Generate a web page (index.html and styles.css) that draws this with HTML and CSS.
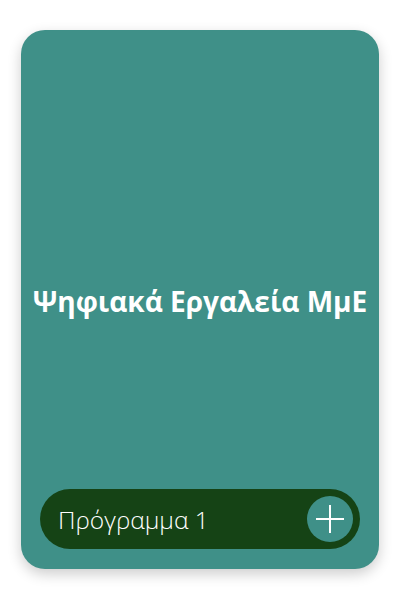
FILE: index.html
```html
<!DOCTYPE html>
<html lang="el">
<head>
<meta charset="utf-8">
<link rel="stylesheet" href="styles.css">
</head>
<body>
<div class="card">
  <div class="spacer"></div>
  <h1 class="title">Ψηφιακά Εργαλεία ΜμΕ</h1>
  <div class="bottom">
    <div class="pill">
      <span class="pill-text">Πρόγραμμα 1</span>
      <span class="add">
        <svg width="30" height="30" viewBox="0 0 30 30"><path d="M15 1V29M1 15H29" stroke="#fff" stroke-width="2" fill="none"/></svg>
      </span>
    </div>
  </div>
</div>
</body>
</html>
```
FILE: styles.css
```css
html, body { margin: 0; padding: 0; background: #fff; }
body { padding: 30px 21px 31px; }
.card {
  height: 539px;
  background: #3f9088;
  border-radius: 24px;
  box-shadow: 0 5px 14px rgba(0,0,0,0.2);
  display: grid;
  grid-template-rows: 1fr auto 1fr;
  padding: 2px 19px 0;
  box-sizing: border-box;
}
.title {
  margin: 0 -19px;
  white-space: nowrap;
  text-align: center;
  color: #fff;
  font-family: "Open Sans", sans-serif;
  font-weight: 700;
  font-size: 28px;
  line-height: 36px;
}
.bottom { display: flex; align-items: flex-end; padding-bottom: 20px; }
.pill {
  flex: 1;
  height: 60px;
  border-radius: 30px;
  background: #154315;
  display: flex;
  align-items: center;
  justify-content: space-between;
  padding: 0 7px 0 18px;
}
.pill-text {
  color: #fff;
  font-family: "Open Sans", sans-serif;
  font-weight: 300;
  font-size: 24.5px;
}
.add {
  width: 46px;
  height: 46px;
  border-radius: 50%;
  background: #3f9088;
  display: flex;
  align-items: center;
  justify-content: center;
}
.add svg { display: block; }
```
